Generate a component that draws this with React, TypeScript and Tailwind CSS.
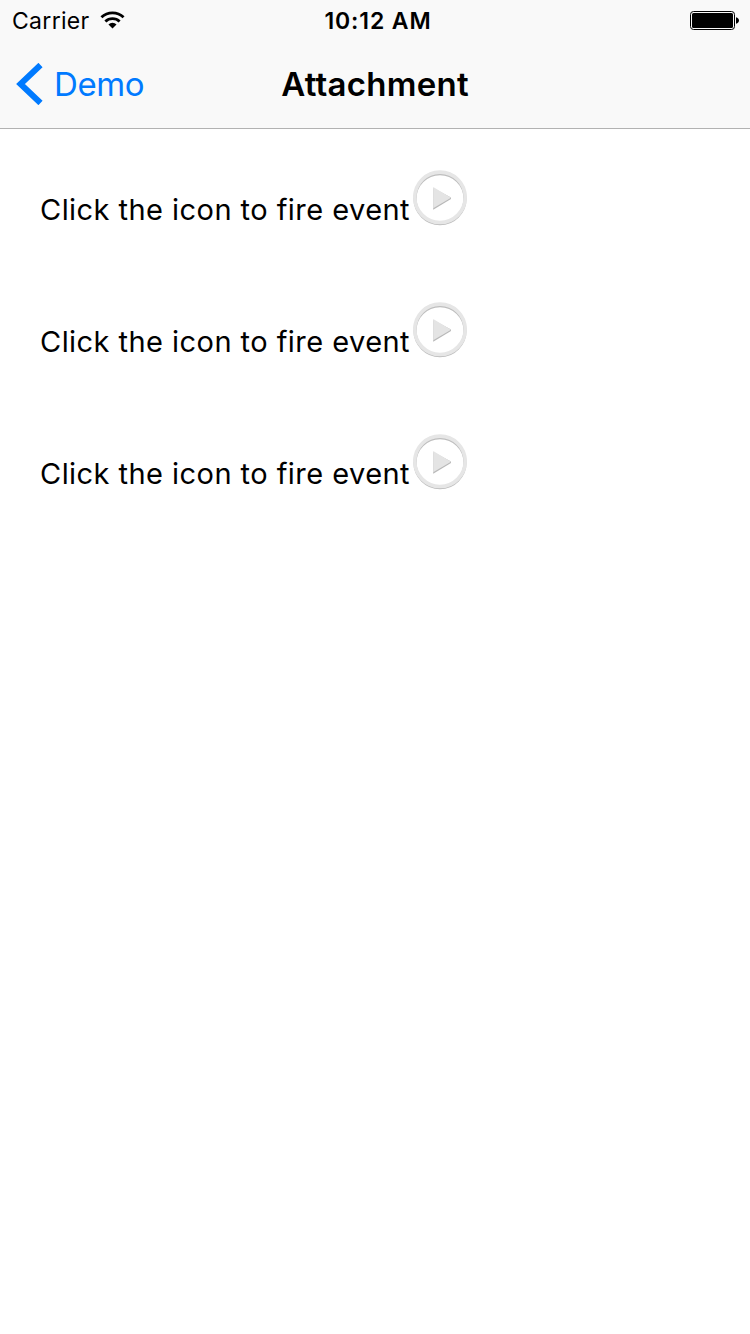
import React from "react";

function PlayIcon() {
  return (
    <svg className="block h-[58px] w-[56px] shrink-0" viewBox="0 0 56 58" fill="none">
      <circle cx="28" cy="29.6" r="25" stroke="#bdbdbd" strokeWidth="3.2" />
      <circle cx="28" cy="28.3" r="25.2" stroke="#e6e6e6" strokeWidth="3.6" />
      <path d="M21.2 19v21.8L39 30v-1.5z" fill="#b8b8b8" />
      <path d="M21.2 18v21.2L39 28.7z" fill="#e4e4e4" />
    </svg>
  );
}

function Row() {
  return (
    <div className="flex h-[132px] pl-10">
      <span className="w-[372px] whitespace-nowrap pt-[61px] text-[29px] leading-[40px] tracking-[0.45px]">
        Click the icon to fire event
      </span>
      <div className="pt-[40px]">
        <PlayIcon />
      </div>
    </div>
  );
}

function WifiIcon() {
  return (
    <svg className="h-[18px] w-[25px]" viewBox="0 0 26 18" fill="none" stroke="#000" strokeWidth="2.9">
      <path d="M1.5 6.2a16.5 16.5 0 0 1 23 0M5.6 10.5a10.6 10.6 0 0 1 14.8 0" />
      <path d="M13 17.8l-4.2-4.1a6 6 0 0 1 8.4 0z" fill="#000" stroke="none" />
    </svg>
  );
}

function BatteryIcon() {
  return (
    <svg className="h-5 w-[50px] justify-self-end" viewBox="0 0 50 20">
      <rect x="0.5" y="1.5" width="44" height="18" rx="3" fill="none" stroke="#000" />
      <rect x="2" y="3" width="41" height="15" rx="1.5" fill="#000" />
      <path d="M46 7.2c1.8.5 3 1.7 3 3.3s-1.2 2.8-3 3.3z" fill="#000" />
    </svg>
  );
}

export default function App() {
  return (
    <div className="h-[1334px] w-[750px] overflow-hidden bg-white font-['Inter',sans-serif] text-black">
      <header className="h-[129px] border-b border-[#b2b2b2] bg-[#f9f9f9]">
        <div className="grid h-10 grid-cols-[1fr_auto_1fr] items-center pl-3 pr-[10px] text-[23px]">
          <div className="flex items-center gap-[10px]">
            <span className="pt-0.5 tracking-[0.3px]">Carrier</span>
            <WifiIcon />
          </div>
          <span className="pl-[4px] pt-0.5 font-semibold tracking-[0.9px]">10:12 AM</span>
          <BatteryIcon />
        </div>
        <div className="grid h-[88px] grid-cols-[1fr_auto_1fr] items-center px-4 text-[33px]">
          <div className="flex items-center gap-[11px] text-[#007aff]">
            <svg className="h-[42px] w-[27px]" viewBox="0 0 27 42" fill="none" stroke="currentColor" strokeWidth="6">
              <path d="M24.5 2L4.5 21l20 19" />
            </svg>
            <span className="pt-0.5 tracking-[-0.4px]">Demo</span>
          </div>
          <h1 className="pt-0.5 font-semibold tracking-[0.25px]">Attachment</h1>
        </div>
      </header>
      <main>
        <Row />
        <Row />
        <Row />
      </main>
    </div>
  );
}
